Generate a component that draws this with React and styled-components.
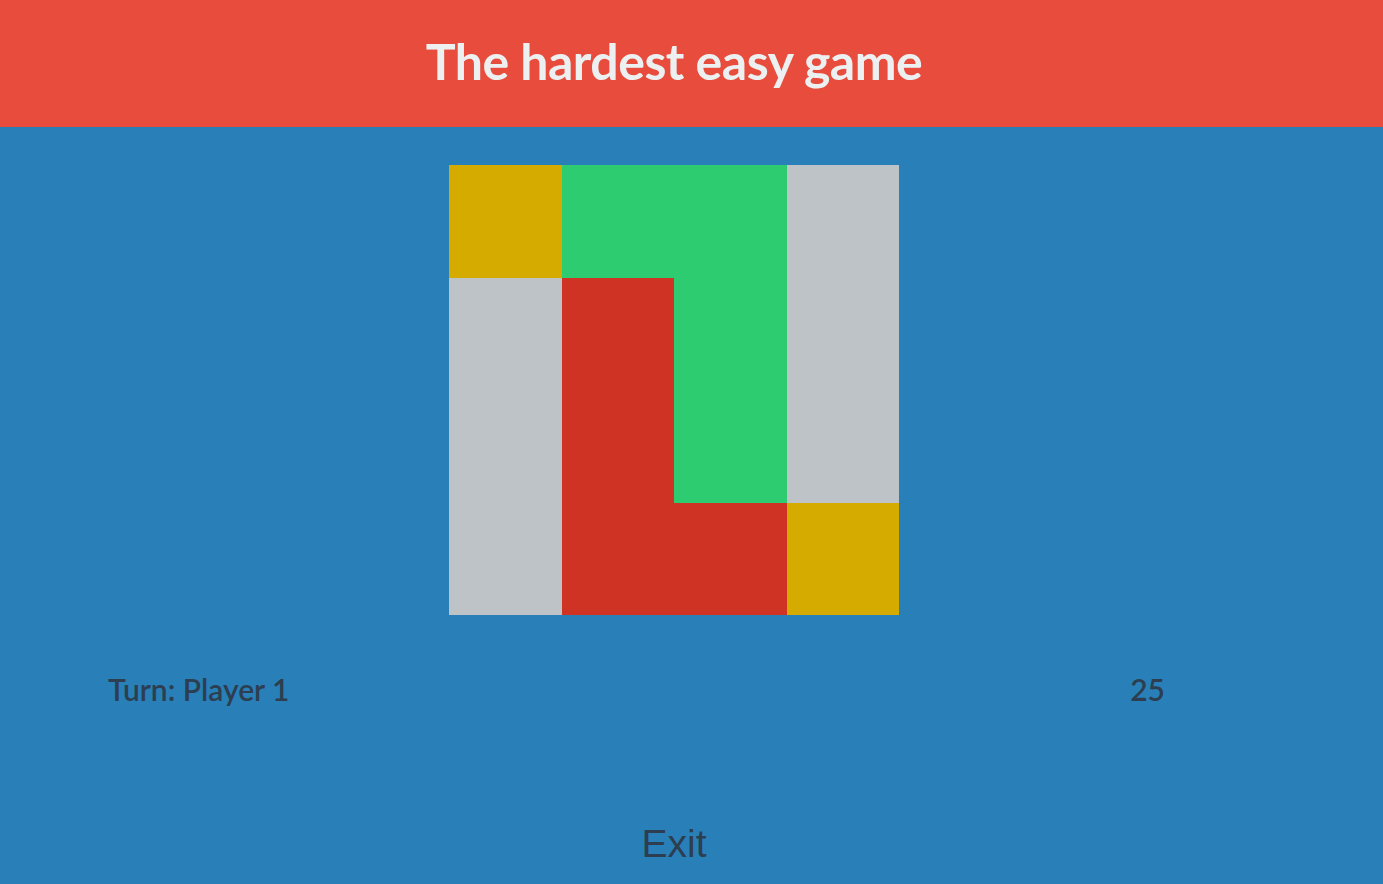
import React from "react";
import styled, { createGlobalStyle } from "styled-components";

const GlobalStyle = createGlobalStyle`
  html, body {
    margin: 0;
    padding: 0;
    background: #2980b9;
    font-family: Lato, "Open Sans", sans-serif;
  }
`;

const Page = styled.div`
  width: 1383px;
  height: 884px;
  background: #2980b9;
  overflow: hidden;
`;

const Header = styled.header`
  height: 127px;
  background: #e74c3c;
  display: flex;
  align-items: center;
  justify-content: center;
`;

const Title = styled.h1`
  margin: 0 0 6px 0;
  padding-right: 35px;
  font-family: Lato, sans-serif;
  font-weight: 700;
  font-size: 50px;
  letter-spacing: -0.5px;
  color: #ecf0f1;
`;

const Main = styled.main`
  padding: 38px 35px 0 0;
  display: flex;
  flex-direction: column;
  align-items: center;
`;

const Board = styled.div`
  display: grid;
  grid-template-columns: repeat(4, 112.5px);
  grid-template-rows: repeat(4, 112.5px);
`;

const colors = {
  y: "#d6ab00",
  g: "#2ecc71",
  s: "#bdc3c7",
  r: "#cf3324",
};

const Cell = styled.div`
  background: ${(p) => colors[p.$c]};
`;

const Info = styled.div`
  align-self: stretch;
  display: flex;
  justify-content: space-between;
  padding: 56px 183px 0 108px;
  font-family: Lato, sans-serif;
  font-weight: 600;
  font-size: 30px;
  color: #2c3e50;
`;

const Exit = styled.button`
  margin-top: 115px;
  background: none;
  border: none;
  padding: 0;
  font-family: "Liberation Sans", Arial, sans-serif;
  font-size: 39px;
  color: #2c3e50;
  cursor: pointer;
`;

const board = ["yggs", "srgs", "srgs", "srry"];

export default function App() {
  return (
    <Page>
      <GlobalStyle />
      <Header>
        <Title>The hardest easy game</Title>
      </Header>
      <Main>
        <Board>
          {board.map((row, i) =>
            row.split("").map((c, j) => <Cell key={i + "-" + j} $c={c} />)
          )}
        </Board>
        <Info>
          <span>Turn: Player 1</span>
          <span>25</span>
        </Info>
        <Exit>Exit</Exit>
      </Main>
    </Page>
  );
}
